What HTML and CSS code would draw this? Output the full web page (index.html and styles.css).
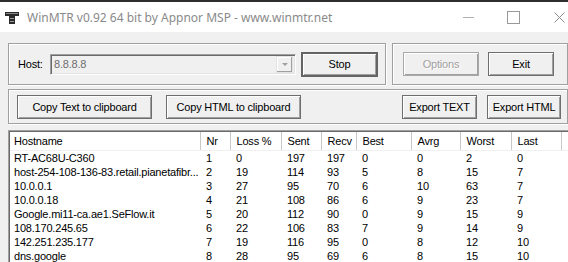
FILE: index.html
```html
<!DOCTYPE html>
<html lang="en">
<head>
    <meta charset="UTF-8">
    <title>WinMTR</title>
    <link rel="stylesheet" href="styles.css">
</head>
<body>
<div class="window">
    <div class="titlebar">
        <svg class="app-icon" width="16" height="16" viewBox="0 0 16 16">
            <rect x="1" y="2" width="14" height="4" fill="#2b2b2b"/>
            <rect x="2" y="3" width="12" height="1" fill="#8a8a8a"/>
            <rect x="5" y="6" width="6" height="8" fill="#2b2b2b"/>
            <rect x="6" y="8" width="4" height="1" fill="#9a9a9a"/>
            <rect x="6" y="11" width="4" height="1" fill="#9a9a9a"/>
        </svg>
        <span class="title">WinMTR v0.92 64 bit by Appnor MSP - www.winmtr.net</span>
        <div class="caption-buttons">
            <span class="cap cap-min"></span>
            <span class="cap cap-max"></span>
            <span class="cap cap-close">
                <svg width="11" height="11" viewBox="0 0 11 11"><path d="M0.5 0.5 L10.5 10.5 M10.5 0.5 L0.5 10.5" stroke="#8c8c8c" stroke-width="1"/></svg>
            </span>
        </div>
    </div>

    <div class="client">
        <div class="row">
            <div class="group group-host">
                <span class="label">Host:</span>
                <div class="combo">
                    <span class="combo-text">8.8.8.8</span>
                    <span class="combo-arrow"><i></i></span>
                </div>
                <button class="btn btn-default btn-stop">Stop</button>
            </div>
            <div class="group group-opts">
                <button class="btn btn-options" disabled>Options</button>
                <button class="btn btn-exit">Exit</button>
            </div>
        </div>

        <div class="group group-copy">
            <button class="btn btn-copy">Copy Text to clipboard</button>
            <button class="btn btn-copy">Copy HTML to clipboard</button>
            <span class="spacer"></span>
            <button class="btn btn-export">Export TEXT</button>
            <button class="btn btn-export2">Export HTML</button>
        </div>

        <div class="listview">
            <table class="report">
                <colgroup>
                    <col style="width:190px">
                    <col style="width:30px">
                    <col style="width:51px">
                    <col style="width:40px">
                    <col style="width:35px">
                    <col style="width:55px">
                    <col style="width:49px">
                    <col style="width:51px">
                    <col style="width:50px">
                    <col>
                </colgroup>
                <thead>
                <tr>
                    <th>Hostname</th><th>Nr</th><th>Loss %</th><th>Sent</th><th>Recv</th><th>Best</th><th>Avrg</th><th>Worst</th><th>Last</th><th></th>
                </tr>
                </thead>
                <tbody>
                <tr><td>RT-AC68U-C360</td><td>1</td><td>0</td><td>197</td><td>197</td><td>0</td><td>0</td><td>2</td><td>0</td><td></td></tr>
                <tr><td>host-254-108-136-83.retail.pianetafibr...</td><td>2</td><td>19</td><td>114</td><td>93</td><td>5</td><td>8</td><td>15</td><td>7</td><td></td></tr>
                <tr><td>10.0.0.1</td><td>3</td><td>27</td><td>95</td><td>70</td><td>6</td><td>10</td><td>63</td><td>7</td><td></td></tr>
                <tr><td>10.0.0.18</td><td>4</td><td>21</td><td>108</td><td>86</td><td>6</td><td>9</td><td>23</td><td>7</td><td></td></tr>
                <tr><td>Google.mi11-ca.ae1.SeFlow.it</td><td>5</td><td>20</td><td>112</td><td>90</td><td>0</td><td>9</td><td>15</td><td>9</td><td></td></tr>
                <tr><td>108.170.245.65</td><td>6</td><td>22</td><td>106</td><td>83</td><td>7</td><td>9</td><td>14</td><td>9</td><td></td></tr>
                <tr><td>142.251.235.177</td><td>7</td><td>19</td><td>116</td><td>95</td><td>0</td><td>8</td><td>12</td><td>10</td><td></td></tr>
                <tr><td>dns.google</td><td>8</td><td>28</td><td>95</td><td>69</td><td>6</td><td>8</td><td>15</td><td>10</td><td></td></tr>
                </tbody>
            </table>
        </div>
    </div>
</div>
</body>
</html>
```

FILE: styles.css
```css
*{
    margin: 0;
    padding: 0;
    box-sizing: border-box;
}
body{
    width: 568px;
    height: 262px;
    overflow: hidden;
    background: #f0f0f0;
    font-family: "Liberation Sans", Arial, sans-serif;
    font-size: 11px;
    letter-spacing: -0.2px;
    color: #000;
}
.window{
    width: 568px;
    height: 262px;
    overflow: hidden;
}

/* title bar */
.titlebar{
    height: 32px;
    background: #fff;
    border-top: 2px solid #2e2e2e;
    display: flex;
    align-items: center;
}
.app-icon{
    margin-left: 4px;
    margin-top: 1px;
}
.title{
    margin-left: 7px;
    font-family: "Noto Sans", "Open Sans", sans-serif;
    font-size: 12px;
    letter-spacing: 0;
    color: #8a8a8a;
}
.caption-buttons{
    margin-left: auto;
    display: flex;
    height: 30px;
}
.cap{
    width: 46px;
    height: 30px;
    display: flex;
    align-items: center;
    justify-content: center;
}
.cap-max{
    width: 45px;
}
.cap-min::before{
    content: "";
    width: 11px;
    height: 1px;
    background: #b0b0b0;
}
.cap-max::before{
    content: "";
    width: 11px;
    height: 11px;
    border: 1px solid #9a9a9a;
}
.cap-close{
    width: 32px;
    justify-content: flex-start;
    padding-left: 18px;
}

/* client area */
.client{
    padding: 11px 0 0 8px;
}
.row{
    display: flex;
    gap: 6px;
}
.group{
    border: 1px solid #a0a0a0;
    box-shadow: inset 1px 1px 0 #fff, 1px 1px 0 #fff;
    display: flex;
    align-items: center;
}
.group-host{
    width: 378px;
    height: 42px;
    padding-left: 9px;
}
.group-opts{
    width: 176px;
    height: 42px;
    padding-left: 10px;
}
.group-copy{
    width: 560px;
    height: 35px;
    margin-top: 4px;
    padding-left: 8px;
}
.spacer{
    flex: 1;
}

.label{
    width: 32px;
}
.combo{
    width: 246px;
    height: 21px;
    display: flex;
    align-items: center;
    border: 1px solid;
    border-color: #a0a0a0 #fff #fff #a0a0a0;
    box-shadow: inset 1px 1px 0 #696969, inset -1px -1px 0 #e3e3e3;
    padding: 0 2px 0 3px;
}
.combo-text{
    flex: 1;
    color: #6d6d6d;
}
.combo-arrow{
    width: 17px;
    height: 17px;
    background: #f0f0f0;
    box-shadow: inset -1px -1px 0 #a0a0a0, inset 1px 1px 0 #fff;
    border: 1px solid #e3e3e3;
    display: flex;
    align-items: center;
    justify-content: center;
}
.combo-arrow i{
    border-left: 3px solid transparent;
    border-right: 3px solid transparent;
    border-top: 3px solid #a0a0a0;
}

.btn{
    height: 24px;
    font-family: inherit;
    font-size: 11px;
    letter-spacing: -0.2px;
    color: #000;
    background: #f0f0f0;
    border: 1px solid #6e6e6e;
    box-shadow: inset 1px 1px 0 #fff, inset -1px -1px 0 #a0a0a0;
}
.btn-default{
    border: 2px solid #646464;
}
.btn-stop{
    width: 77px;
    height: 25px;
    margin-left: 5px;
}
.btn-options{
    width: 76px;
    color: #a0a0a0;
    text-shadow: 1px 1px 0 #fff;
    border-color: #a8a8a8;
}
.btn-exit{
    width: 66px;
    margin-left: 9px;
}
.btn-copy{
    width: 135px;
    margin-right: 14px;
}
.btn-export{
    width: 75px;
}
.btn-export2{
    width: 74px;
    margin-left: 10px;
    margin-right: 6px;
}

/* list view */
.listview{
    margin-top: 6px;
    width: 570px;
    height: 140px;
    background: #fff;
    border-top: 1px solid #a0a0a0;
    border-left: 1px solid #a0a0a0;
    box-shadow: inset 1px 1px 0 #696969;
    padding: 1px 0 0 1px;
    overflow: hidden;
}
.report{
    border-collapse: collapse;
    table-layout: fixed;
    width: 620px;
}
.report th{
    height: 18px;
    font-weight: normal;
    text-align: left;
    padding: 0 0 0 6px;
    border-right: 1px solid #c8c8c8;
    border-bottom: 1px solid #f0f0f0;
    white-space: nowrap;
    overflow: hidden;
}
.report th:first-child,
.report td:first-child{
    padding-left: 4px;
}
.report td{
    height: 14px;
    line-height: 14px;
    padding: 0 0 0 6px;
    white-space: nowrap;
    overflow: hidden;
    text-overflow: ellipsis;
}
```
